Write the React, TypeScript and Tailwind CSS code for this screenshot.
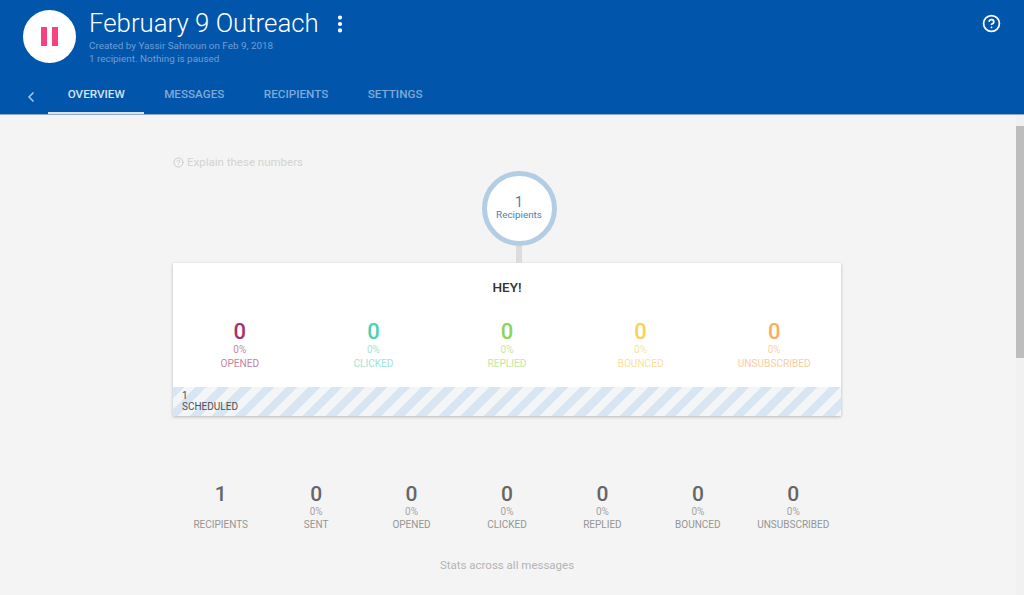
import { ChevronLeft, CircleHelp, EllipsisVertical } from 'lucide-react'

// ── Data ─────────────────────────────────────────────────────────────────────
const TABS = ['OVERVIEW', 'MESSAGES', 'RECIPIENTS', 'SETTINGS']

const CARD_STATS = [
  { label: 'OPENED', num: 'text-[#a5326c]', pct: 'text-[#c88aa9]', lab: 'text-[#c086a4]' },
  { label: 'CLICKED', num: 'text-[#4dd0b5]', pct: 'text-[#a3e5d8]', lab: 'text-[#9fe3d6]' },
  { label: 'REPLIED', num: 'text-[#8bd45a]', pct: 'text-[#c2e9a8]', lab: 'text-[#bfe8a5]' },
  { label: 'BOUNCED', num: 'text-[#fbcf55]', pct: 'text-[#fce3a3]', lab: 'text-[#fbdf9c]' },
  { label: 'UNSUBSCRIBED', num: 'text-[#f8ae5e]', pct: 'text-[#fbd2a8]', lab: 'text-[#f9cda5]' },
]

const TOTALS = [
  { label: 'RECIPIENTS', value: '1', pct: '' },
  { label: 'SENT', value: '0', pct: '0%' },
  { label: 'OPENED', value: '0', pct: '0%' },
  { label: 'CLICKED', value: '0', pct: '0%' },
  { label: 'REPLIED', value: '0', pct: '0%' },
  { label: 'BOUNCED', value: '0', pct: '0%' },
  { label: 'UNSUBSCRIBED', value: '0', pct: '0%' },
]

// ── Header ───────────────────────────────────────────────────────────────────
function Header() {
  return (
    <header className="h-[115px] shrink-0 bg-[#0156ac] border-b border-[#8fa9c6] flex flex-col">
      <div className="flex items-start pl-[23px] pr-[23px] h-[77px]">
        <div className="mt-[10px] w-[53px] h-[53px] rounded-full bg-white flex items-center justify-center gap-[5px] shrink-0">
          <span className="w-[6px] h-[19px] bg-[#f8417f]" />
          <span className="w-[6px] h-[19px] bg-[#f8417f]" />
        </div>
        <div className="ml-[13px] flex-1">
          <div className="flex items-center h-[38px] pt-[10px]">
            <h1 className="text-[25.8px] leading-none font-light text-white">February 9 Outreach</h1>
            <EllipsisVertical className="ml-[10px] w-[22px] h-[22px] text-white" strokeWidth={2.6} />
          </div>
          <p className="mt-[1px] text-[9.9px] leading-[13px] text-[#6e9fd2]">Created by Yassir Sahnoun on Feb 9, 2018</p>
          <p className="text-[9.9px] leading-[13px] text-[#6e9fd2]">1 recipient. Nothing is paused</p>
        </div>
        <CircleHelp className="mt-[14px] w-[19px] h-[19px] text-white" strokeWidth={2.2} />
      </div>
      <nav className="flex items-stretch h-[37px]">
        <div className="w-[48px] flex items-center justify-center pl-[15px] pr-[2px] pt-[2px]">
          <ChevronLeft className="w-[16px] h-[16px] text-[#a9c7e6]" strokeWidth={2.5} />
        </div>
        {TABS.map((tab, i) => (
          <div
            key={tab}
            className={`px-[19.7px] flex items-center justify-center text-[11.7px] font-medium border-b-2 ${
              i === 0 ? 'text-[#d5e3f2] border-[#d5e3f2]' : 'text-[#7fa9d6] border-transparent'
            }`}
          >
            {tab}
          </div>
        ))}
      </nav>
    </header>
  )
}

// ── Scheduled card ───────────────────────────────────────────────────────────
function MessageCard() {
  return (
    <div className="bg-white shadow-[0_1px_3px_rgba(0,0,0,0.25)]">
      <h2 className="pt-[15px] h-[47px] text-center text-[13.5px] leading-[18px] font-medium text-[#333333]">HEY!</h2>
      <div className="grid grid-cols-5 h-[77px] pt-[9px]">
        {CARD_STATS.map((s) => (
          <div key={s.label} className="flex flex-col items-center">
            <span className={`text-[22px] leading-[26px] font-medium ${s.num}`}>0</span>
            <span className={`text-[10px] leading-[12px] -mt-[1px] ${s.pct}`}>0%</span>
            <span className={`text-[10.1px] leading-[12px] mt-[2px] ${s.lab}`}>{s.label}</span>
          </div>
        ))}
      </div>
      <div className="h-[29px] pl-[9px] pt-[4px] text-[10px] leading-[10px] text-[#4a4f55] bg-[repeating-linear-gradient(135deg,#d8e6f3_0px,#d8e6f3_8px,#f4f5f6_8px,#f4f5f6_16px)]">
        <div>1</div>
        <div className="mt-[1px]">SCHEDULED</div>
      </div>
    </div>
  )
}

// ── Page ─────────────────────────────────────────────────────────────────────
export default function App() {
  return (
    <div className="h-[595px] w-[1024px] overflow-hidden flex flex-col bg-[#f4f4f4] font-['Roboto','Liberation_Sans',sans-serif]">
      <Header />

      <div className="flex flex-1 min-h-0">
        <main className="flex-1 overflow-hidden">
          <div className="w-[668px] ml-[173px]">
            <div className="flex items-center gap-[3px] pt-[39px] h-[56px] text-[11.5px] text-[#d3d3d3]">
              <CircleHelp className="w-[11px] h-[11px] text-[#c9c9c9]" strokeWidth={2} />
              <span>Explain these numbers</span>
            </div>

            <div className="flex flex-col items-center pl-[24px]">
              <div className="w-[75px] h-[75px] pb-[2px] rounded-full bg-white border-[5px] border-[#b3cde5] flex flex-col items-center justify-center text-[#4a7fb5]">
                <span className="text-[14px] leading-[14px]">1</span>
                <span className="text-[9.9px] leading-[12px]">Recipients</span>
              </div>
              <div className="w-[6px] h-[17px] bg-[#dcdcdc]" />
            </div>

            <MessageCard />

            <div className="grid grid-cols-7 mt-[66px]">
              {TOTALS.map((t) => (
                <div key={t.label} className="flex flex-col items-center text-[#959595]">
                  <span className="text-[21px] leading-[24px] font-medium text-[#666666]">{t.value}</span>
                  <span className="h-[12px] text-[10px] leading-[12px] text-[#a5a5a5]">{t.pct}</span>
                  <span className="mt-[1px] text-[10px] leading-[12px]">{t.label}</span>
                </div>
              ))}
            </div>

            <p className="mt-[27px] text-center text-[11.5px] leading-[15px] text-[#b5b5b5]">Stats across all messages</p>
          </div>
        </main>

        {/* scrollbar */}
        <div className="w-[8px] shrink-0 bg-[#f1f1f1] pt-[11px]">
          <div className="h-[232px] bg-[#bdbdbd]" />
        </div>
      </div>
    </div>
  )
}
